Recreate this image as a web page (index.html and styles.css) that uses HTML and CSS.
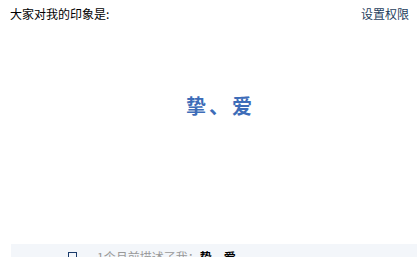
FILE: index.html
```html
<!DOCTYPE html>
<html lang="zh-CN">
<head>
<meta charset="utf-8">
<link rel="stylesheet" href="styles.css">
</head>
<body>
<div class="page">
  <div class="header">
    <span class="title">大家对我的印象是:</span>
    <a class="perm">设置权限</a>
  </div>
  <div class="impression">挚、爱</div>
  <div class="footer">
    <span class="box"></span>
    <span class="desc">1个月前描述了我：</span>
    <span class="words">挚、爱</span>
  </div>
</div>
</body>
</html>
```
FILE: styles.css
```css
html, body {
  margin: 0;
  padding: 0;
  background: #ffffff;
  overflow: hidden;
}
body {
  font-family: "Noto Sans CJK SC", "Liberation Sans", sans-serif;
  font-size: 12px;
  color: #000;
}
.page {
  width: 417px;
  height: 257px;
  display: flex;
  flex-direction: column;
}
.header {
  display: flex;
  justify-content: space-between;
  padding: 8px 8px 0 10px;
  height: 12px;
  line-height: 12px;
}
.perm {
  color: #1d3d5c;
  cursor: pointer;
}
.impression {
  margin-top: 76px;
  padding-left: 24px;
  text-align: center;
  font-size: 20px;
  line-height: 20px;
  letter-spacing: 3px;
  color: #3d6cb8;
  font-weight: bold;
}
.footer {
  margin-top: 128px;
  margin-left: 11px;
  background: #f3f6fa;
  height: 30px;
  display: flex;
  align-items: flex-start;
  padding-top: 6px;
  box-sizing: border-box;
  line-height: 14px;
}
.box {
  width: 7px;
  height: 7px;
  border: 1px solid #1a3a6a;
  margin-left: 57px;
  margin-top: 2px;
}
.desc {
  color: #999999;
  margin-left: 20px;
}
.words {
  color: #000;
  font-weight: bold;
}
```
